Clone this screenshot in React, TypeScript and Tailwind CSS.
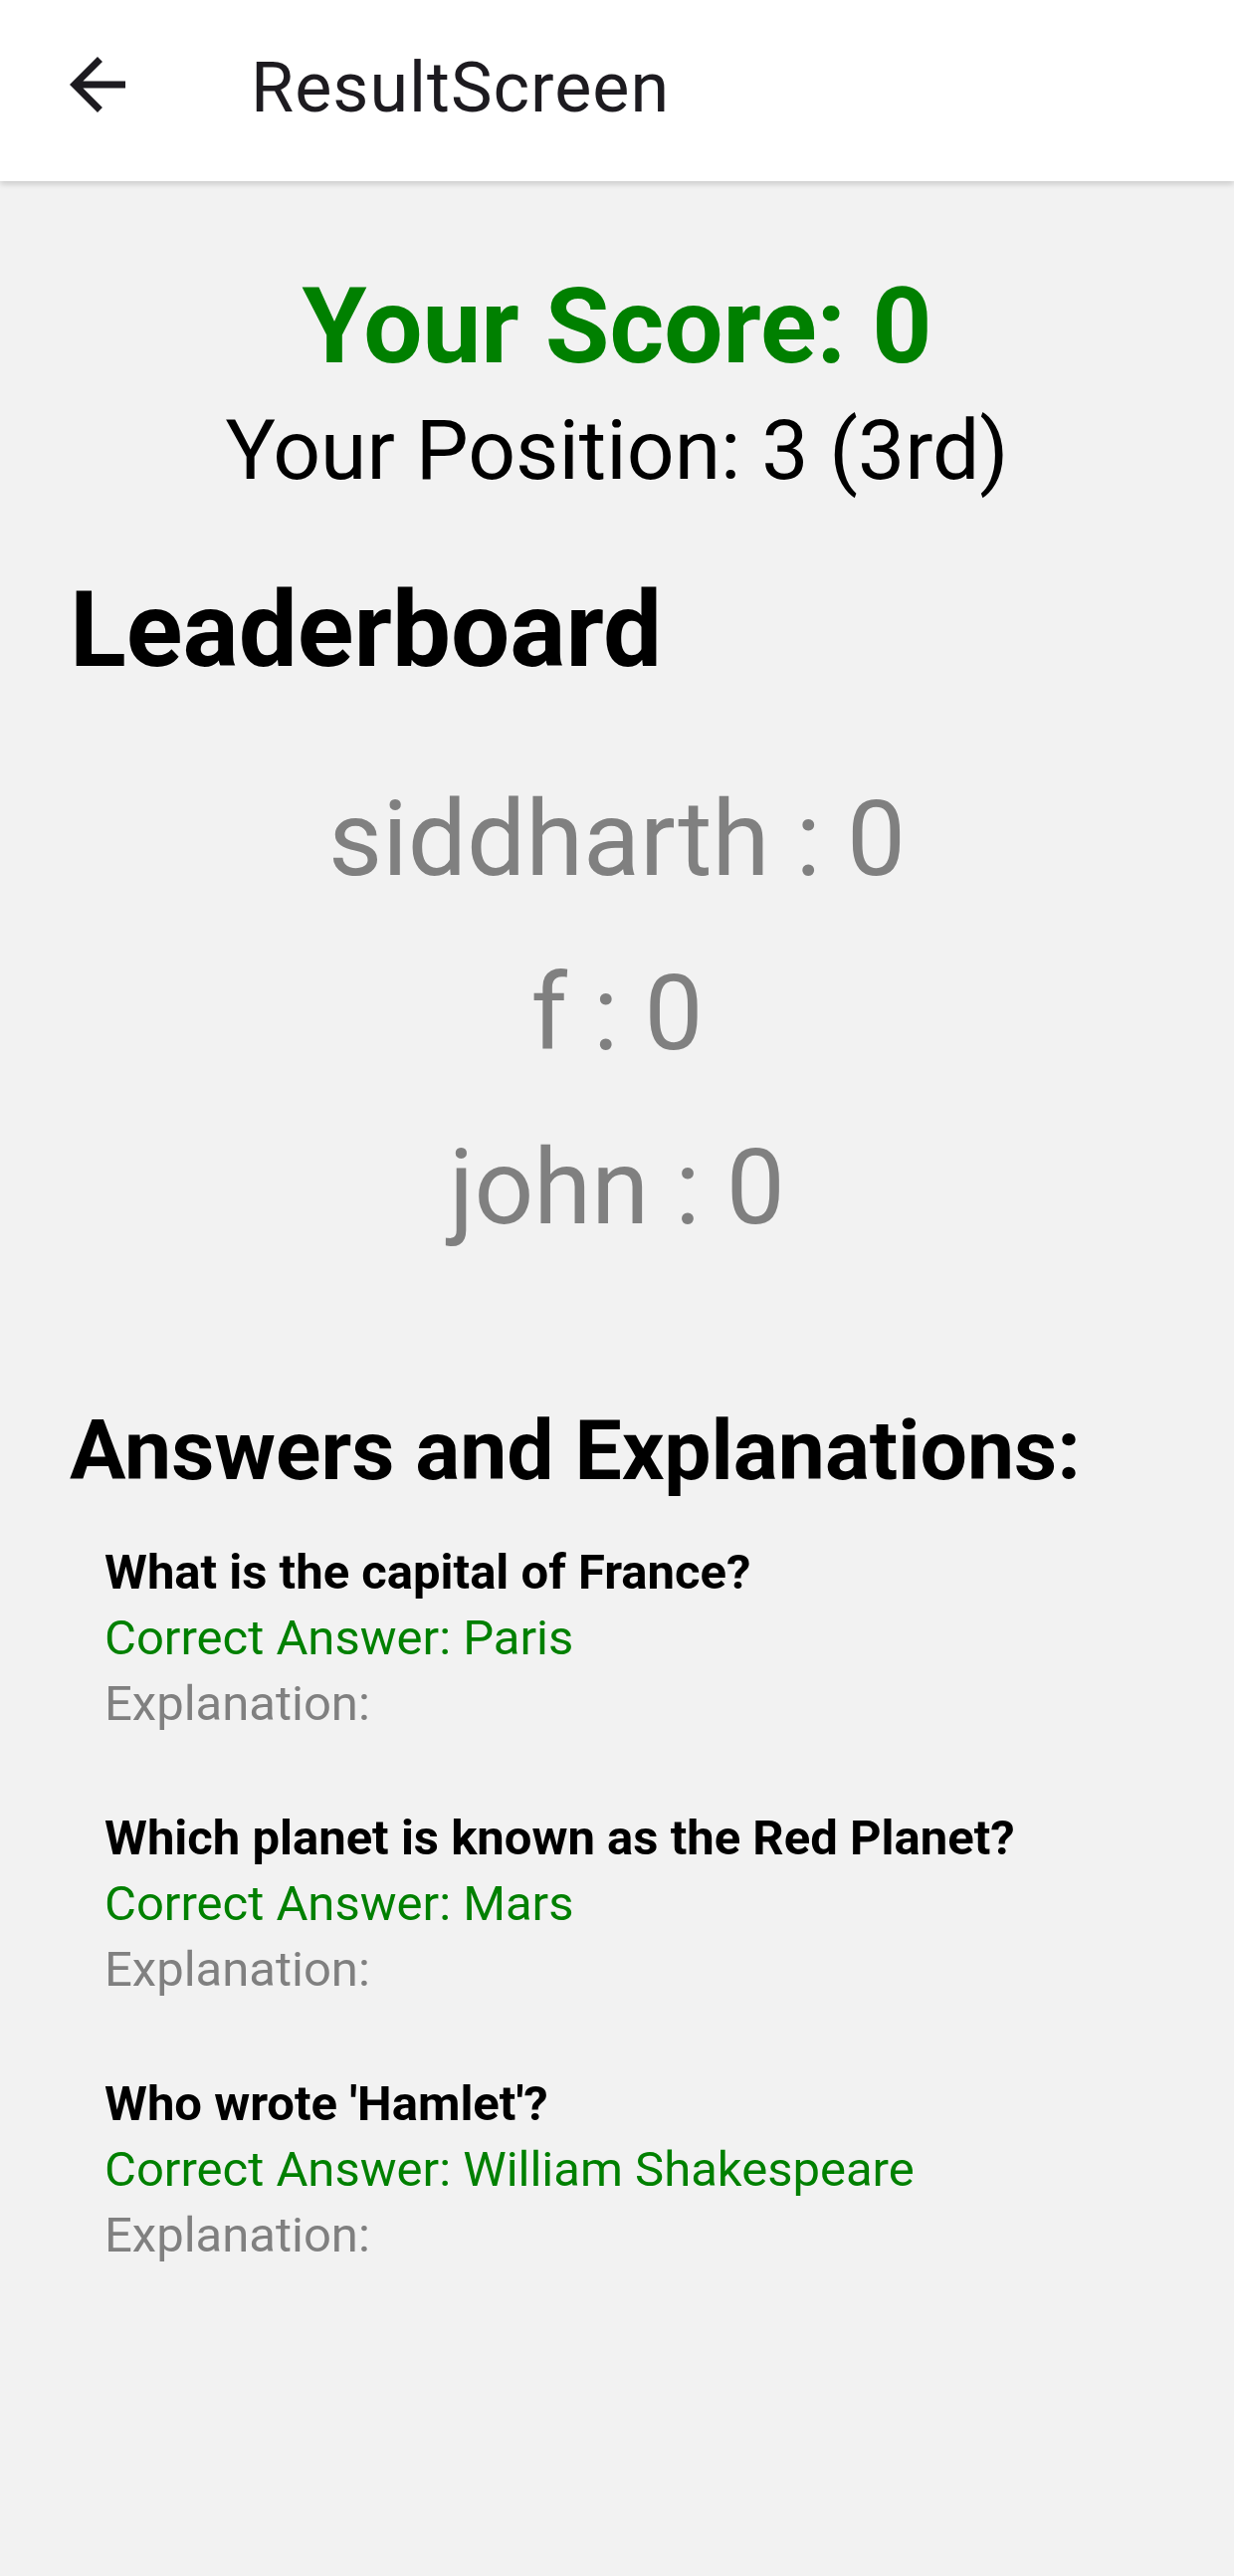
import React from 'react'

const leaderboard = [
  { name: 'siddharth', score: 0 },
  { name: 'f', score: 0 },
  { name: 'john', score: 0 },
]

const answers = [
  { question: 'What is the capital of France?', answer: 'Paris', explanation: '' },
  { question: 'Which planet is known as the Red Planet?', answer: 'Mars', explanation: '' },
  { question: "Who wrote 'Hamlet'?", answer: 'William Shakespeare', explanation: '' },
]

function BackArrow() {
  return (
    <svg width="84" height="84" viewBox="0 0 24 24" className="shrink-0 text-[#1d1b20]" fill="currentColor">
      <path d="M20 11H7.83l5.59-5.59L12 4l-8 8 8 8 1.41-1.41L7.83 13H20v-2z" />
    </svg>
  )
}

export default function App() {
  return (
    <div className="min-h-[2588px] w-full bg-[#f2f2f2] font-['Roboto',sans-serif]">
      <header className="relative z-10 flex h-[182px] w-full items-start bg-white shadow-[0_3px_6px_rgba(0,0,0,0.16)]">
        <div className="mt-[43px] ml-[56px]">
          <BackArrow />
        </div>
        <h1 className="mt-[47px] ml-[112px] text-[70px] leading-[82px] font-normal tracking-[1px] text-[#1d1b20]">
          ResultScreen
        </h1>
      </header>

      <main className="flex flex-col pb-[100px]">
        <div className="mt-[85px] text-center text-[105px] leading-[123px] font-bold text-[#008000]">
          Your Score: 0
        </div>
        <div className="mt-[14px] text-center text-[84px] leading-[98px] text-black">
          Your Position: 3 (3rd)
        </div>

        <h2 className="mt-[70px] pl-[70px] text-[105px] leading-[123px] font-bold text-black">
          Leaderboard
        </h2>
        <div className="mt-[61px] flex flex-col">
          {leaderboard.map((p) => (
            <div key={p.name} className="text-center text-[105px] leading-[175px] text-[#808080]">
              {p.name} : {p.score}
            </div>
          ))}
        </div>

        <h2 className="mt-[128px] pl-[70px] text-[84px] leading-[98px] font-bold text-black">
          Answers and Explanations:
        </h2>
        <div className="mt-[40px] flex flex-col gap-[69px] pl-[105px]">
          {answers.map((a) => (
            <div key={a.question} className="flex flex-col text-[49px] leading-[66px]">
              <div className="font-bold text-black">{a.question}</div>
              <div className="text-[#008000]">Correct Answer: {a.answer}</div>
              <div className="text-[#808080]">Explanation: {a.explanation}</div>
            </div>
          ))}
        </div>
      </main>
    </div>
  )
}
